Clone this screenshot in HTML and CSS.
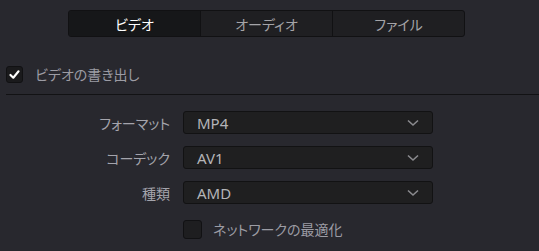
FILE: index.html
```html
<!DOCTYPE html>
<html lang="ja">
<head>
  <meta charset="UTF-8">
  <title>エクスポート設定</title>
  <link rel="stylesheet" href="styles.css">
</head>
<body>
  <div class="panel">
    <div class="tabs">
      <div class="tab active">ビデオ</div>
      <div class="tab">オーディオ</div>
      <div class="tab">ファイル</div>
    </div>

    <label class="check-row">
      <span class="box checked">
        <svg viewBox="0 0 16 16" width="13" height="13"><path d="M3 8.5 L6.5 12 L13 4" fill="none" stroke="#fff" stroke-width="2.6" stroke-linecap="round" stroke-linejoin="round"/></svg>
      </span>
      <span class="check-text">ビデオの書き出し</span>
    </label>

    <div class="divider"></div>

    <div class="form">
      <div class="field">
        <span class="label">フォーマット</span>
        <div class="select"><span class="value">MP4</span><svg class="chev" viewBox="0 0 12 8" width="12" height="8"><path d="M1 1.5 L6 6 L11 1.5" fill="none" stroke="#8a8a8e" stroke-width="1.6"/></svg></div>
      </div>
      <div class="field">
        <span class="label">コーデック</span>
        <div class="select"><span class="value">AV1</span><svg class="chev" viewBox="0 0 12 8" width="12" height="8"><path d="M1 1.5 L6 6 L11 1.5" fill="none" stroke="#8a8a8e" stroke-width="1.6"/></svg></div>
      </div>
      <div class="field">
        <span class="label">種類</span>
        <div class="select"><span class="value">AMD</span><svg class="chev" viewBox="0 0 12 8" width="12" height="8"><path d="M1 1.5 L6 6 L11 1.5" fill="none" stroke="#8a8a8e" stroke-width="1.6"/></svg></div>
      </div>
      <div class="field">
        <span class="label"></span>
        <label class="opt-row">
          <span class="box"></span>
          <span class="check-text">ネットワークの最適化</span>
        </label>
      </div>
    </div>
  </div>
</body>
</html>
```

FILE: styles.css
```css
body {
  margin: 0;
  background-color: #28282e;
  font-family: "Noto Sans CJK JP", "Noto Sans", sans-serif;
  font-feature-settings: "palt";
  color: #a8a8ae;
}

.panel {
  width: 539px;
  height: 251px;
  padding-top: 10px;
  box-sizing: border-box;
}

/* tab strip */
.tabs {
  display: flex;
  margin-left: 68px;
  width: 397px;
  height: 27px;
  box-sizing: border-box;
  border: 1px solid #111113;
  border-radius: 3px;
  background-color: #1f1f22;
  overflow: hidden;
}
.tab {
  flex: 1;
  display: flex;
  justify-content: center;
  align-items: center;
  font-size: 14px;
  color: #a4a4a8;
  border-left: 1px solid #111113;
}
.tab:first-child {
  border-left: none;
}
.tab.active {
  background-color: #161719;
  color: #fff;
}

/* checkbox rows */
.check-row {
  display: flex;
  align-items: center;
  margin: 28px 0 0 6px;
  height: 18px;
}
.box {
  width: 17px;
  height: 17px;
  box-sizing: border-box;
  border: 1px solid #111113;
  border-radius: 3px;
  background-color: #1e1e20;
  display: flex;
  justify-content: center;
  align-items: center;
}
.box.checked {
  background-color: #1a1a1c;
}
.check-text {
  font-size: 14px;
  margin-left: 12px;
  color: #9c9ca4;
}

.divider {
  height: 1px;
  background-color: #121214;
  margin: 11px 0 0 6px;
}

/* form */
.form {
  display: flex;
  flex-direction: column;
  gap: 12px;
  margin-top: 16px;
}
.field {
  display: flex;
  align-items: center;
  height: 23px;
}
.label {
  width: 170px;
  text-align: right;
  font-size: 14px;
  color: #a4a4ac;
}
.select {
  margin-left: 13px;
  width: 250px;
  height: 23px;
  box-sizing: border-box;
  border: 1px solid #121213;
  border-radius: 3px;
  background-color: #1f1f20;
  display: flex;
  align-items: center;
  justify-content: space-between;
  padding: 0 13px 0 13px;
}
.value {
  font-family: "Noto Sans", sans-serif;
  font-size: 15px;
  color: #b4b4b8;
}
.chev {
  display: block;
}
.opt-row {
  display: flex;
  align-items: center;
  margin-left: 13px;
  margin-top: 3px;
}
.opt-row .box {
  width: 19px;
  height: 19px;
}
.opt-row .check-text {
  margin-left: 11px;
}
```
